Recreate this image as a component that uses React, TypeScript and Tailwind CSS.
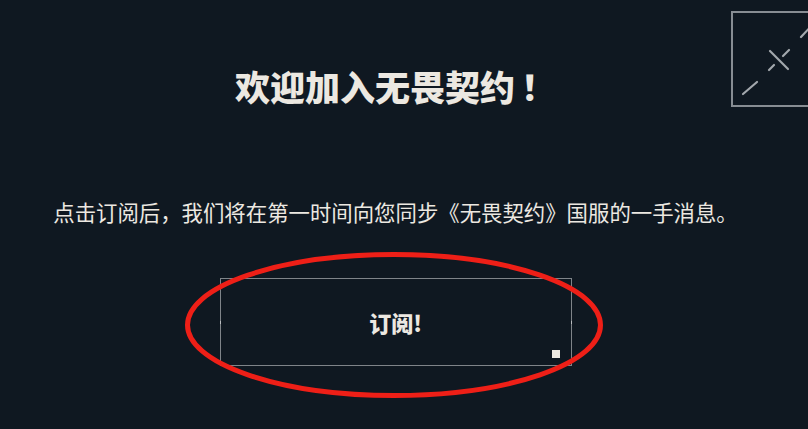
import React from "react";

export default function App() {
  const font = { fontFamily: '"Noto Sans CJK SC", "Noto Sans", sans-serif' };
  return (
    <div
      className="relative w-[808px] h-[429px] overflow-hidden bg-[#0f1821] text-[#ece8e1]"
      style={font}
    >
      <div className="flex flex-col items-center pr-[17px]">
        <h1 className="mt-[68px] text-[35px] leading-none font-extrabold">
          欢迎加入无畏契约<span className="ml-[6px]">！</span>
        </h1>
        <p className="mt-[98px] text-[21.4px] leading-none whitespace-nowrap">
          点击订阅后，我们将在第一时间向您同步《无畏契约》国服的一手消息。
        </p>
        <button className="relative mt-[56px] w-[352px] h-[88px] border border-[#7f8489] flex items-center justify-center text-[22px] font-extrabold">
          订阅!
          <span className="absolute left-[-1px] top-[42px] w-[1px] h-[3px] bg-[#b9bcbf]" />
          <span className="absolute right-[-1px] top-[42px] w-[1px] h-[3px] bg-[#b9bcbf]" />
          <span className="absolute right-[11px] bottom-[7px] w-[8px] h-[8px] bg-[#ece8e1]" />
        </button>
      </div>

      <div className="absolute left-[731px] top-[11px] w-[96px] h-[96px] border-2 border-[#878d93]">
        <svg className="absolute left-[-2px] top-[-2px]" width="96" height="96" viewBox="0 0 96 96">
          <g stroke="#a3a8ad" strokeWidth="2.2" strokeLinecap="round" fill="none">
            <line x1="12" y1="83" x2="26" y2="71" />
            <line x1="39" y1="40" x2="57" y2="58" />
            <line x1="38" y1="59" x2="43" y2="54" />
            <line x1="52" y1="45" x2="58" y2="39" />
            <line x1="70" y1="26" x2="84" y2="11" />
          </g>
        </svg>
      </div>

      <svg className="absolute left-0 top-0 pointer-events-none" width="808" height="429" viewBox="0 0 808 429">
        <ellipse cx="394" cy="325" rx="206.5" ry="70.5" fill="none" stroke="#ee1f17" strokeWidth="5" />
      </svg>
    </div>
  );
}
